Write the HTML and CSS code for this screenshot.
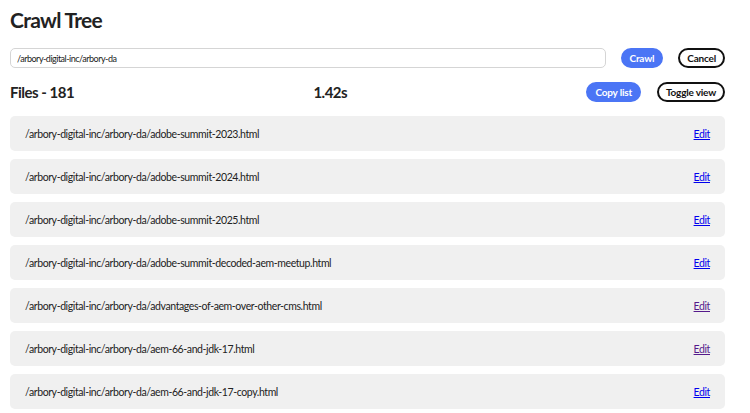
FILE: index.html
```html
<!DOCTYPE html>
<html>
	<head>
		<meta charset="UTF-8">
		<title>Crawl Tree</title>
		<meta name="viewport" content="width=device-width, initial-scale=1.0">
		<link rel="stylesheet" href="styles.css">
	</head>
	<body>
		<h1>Crawl Tree</h1>
		<form class="crawl-form">
			<input class="path-input" type="text" value="/arbory-digital-inc/arbory-da">
			<button type="button" class="btn btn-accent">Crawl</button>
			<button type="button" class="btn btn-outline">Cancel</button>
		</form>
		<div class="results-head">
			<h2>Files - 181</h2>
			<span class="duration">1.42s</span>
			<div class="actions">
				<button type="button" class="btn btn-accent">Copy list</button>
				<button type="button" class="btn btn-outline">Toggle view</button>
			</div>
		</div>
		<ul class="file-list">
			<li><span>/arbory-digital-inc/arbory-da/adobe-summit-2023.html</span><a href="#">Edit</a></li>
			<li><span>/arbory-digital-inc/arbory-da/adobe-summit-2024.html</span><a href="#">Edit</a></li>
			<li><span>/arbory-digital-inc/arbory-da/adobe-summit-2025.html</span><a href="#">Edit</a></li>
			<li><span>/arbory-digital-inc/arbory-da/adobe-summit-decoded-aem-meetup.html</span><a href="#">Edit</a></li>
			<li><span>/arbory-digital-inc/arbory-da/advantages-of-aem-over-other-cms.html</span><a href="#" class="visited">Edit</a></li>
			<li><span>/arbory-digital-inc/arbory-da/aem-66-and-jdk-17.html</span><a href="#" class="visited">Edit</a></li>
			<li><span>/arbory-digital-inc/arbory-da/aem-66-and-jdk-17-copy.html</span><a href="#">Edit</a></li>
		</ul>
	</body>
</html>
```
FILE: styles.css
```css
body {
	margin: 0;
	padding: 0 25px 0 10px;
	font-family: Lato, "Liberation Sans", sans-serif;
	color: #222;
	background: #fff;
}
h1 {
	margin: 0;
	padding-top: 7px;
	font-size: 21px;
	font-weight: 700;
	line-height: 26px;
	letter-spacing: -0.7px;
}
.crawl-form {
	display: flex;
	align-items: center;
	gap: 15px;
	margin-top: 15px;
}
.path-input {
	flex: 1;
	height: 20px;
	box-sizing: border-box;
	padding: 0 6px;
	border: 1px solid #d5d5d5;
	border-radius: 5px;
	font-family: inherit;
	font-size: 9px;
	letter-spacing: -0.5px;
	color: #222;
}
.btn {
	height: 20px;
	padding: 0 7px;
	border-radius: 10px;
	font-family: inherit;
	font-size: 10px;
	font-weight: 700;
	line-height: 16px;
	letter-spacing: -0.2px;
	box-sizing: border-box;
}
.btn-accent {
	border: 2px solid #4b75f5;
	background: #4b75f5;
	color: #fff;
}
.btn-outline {
	border: 2px solid #111;
	background: #fff;
	color: #111;
}
.results-head {
	display: flex;
	justify-content: space-between;
	align-items: center;
	margin-top: 13px;
}
.results-head h2, .duration {
	margin: 0;
	font-size: 15px;
	font-weight: 700;
	line-height: 22px;
	letter-spacing: -0.5px;
}
.actions {
	display: flex;
	gap: 16px;
}
.file-list {
	list-style: none;
	margin: 13px 0 0;
	padding: 0;
	display: flex;
	flex-direction: column;
	gap: 8px;
}
.file-list li {
	display: flex;
	justify-content: space-between;
	align-items: center;
	height: 35px;
	padding: 0 15px;
	border-radius: 5px;
	background: #f0f0f0;
	font-size: 10.5px;
	letter-spacing: -0.4px;
}
.file-list a {
	color: #0000ee;
}
.file-list a.visited {
	color: #551a8b;
}
```
